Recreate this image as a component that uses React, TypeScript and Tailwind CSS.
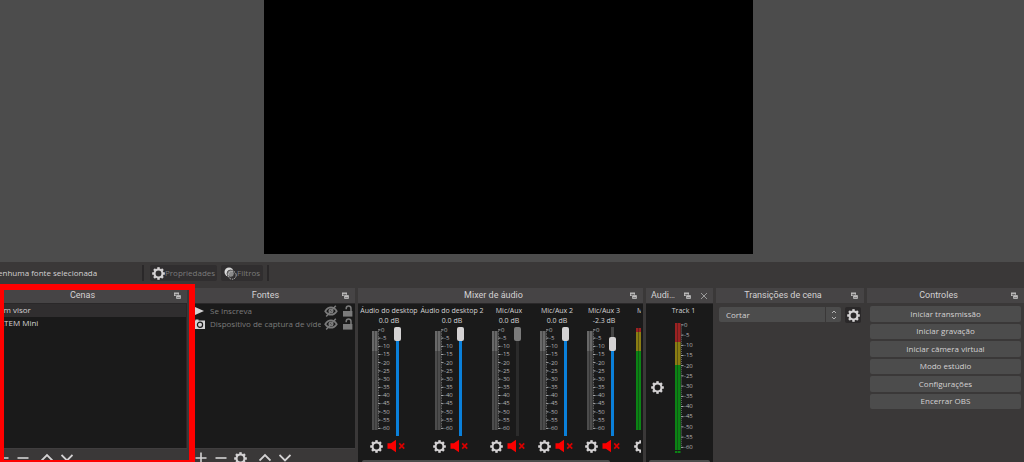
import type { ReactNode } from 'react'
import clsx from 'clsx'

const controls = [
    'Iniciar transmissão',
    'Iniciar gravação',
    'Iniciar câmera virtual',
    'Modo estúdio',
    'Configurações',
    'Encerrar OBS',
]

const channels = [
    { name: 'Áudio do desktop', db: '0.0 dB', level: 100, width: 'w-[62px]' },
    { name: 'Áudio do desktop 2', db: '0.0 dB', level: 100, width: 'w-[64px]' },
    { name: 'Mic/Aux', db: '0.0 dB', level: 100, width: 'w-[50px]', disabled: true },
    { name: 'Mic/Aux 2', db: '0.0 dB', level: 100, width: 'w-[46px]' },
    { name: 'Mic/Aux 3', db: '-2.3 dB', level: 89, width: 'w-[48px]' },
    { name: 'Mic/Aux 4', db: '-2.3 dB', level: 89, width: 'w-[50px]', live: true },
]

const scale = [0, -5, -10, -15, -20, -25, -30, -35, -40, -45, -50, -55, -60]

function GearIcon({ className = 'size-[13px]' }: { className?: string }) {
    return (
        <svg viewBox="0 0 16 16" className={clsx('shrink-0', className)} fill="none" stroke="currentColor" aria-hidden>
            <circle cx="8" cy="8" r="4.9" strokeWidth="2.6" />
            {[0, 45, 90, 135, 180, 225, 270, 315].map((a) => (
                <path key={a} d="M8 0.2V3" strokeWidth="3" transform={`rotate(${a} 8 8)`} />
            ))}
        </svg>
    )
}

function FloatIcon() {
    return (
        <svg viewBox="0 0 9 9" className="size-[9px] shrink-0" aria-hidden>
            <path d="M1 1.5h5v3.5H1z" fill="#bdbcbc" />
            <path d="M1.8 2.9h3.4v1H1.8z" fill="#6a6869" />
            <path d="M3 4h5v4H3z" fill="#d2d1d1" stroke="#464445" strokeWidth=".5" />
            <path d="M3.9 5.8h3.2v1.1H3.9z" fill="#7d7b7c" />
        </svg>
    )
}

function PlusIcon() {
    return (
        <svg viewBox="0 0 12 12" className="size-3" stroke="currentColor" strokeWidth="1.6" aria-hidden>
            <path d="M6 0.5v11M0.5 6h11" />
        </svg>
    )
}

function MinusIcon() {
    return (
        <svg viewBox="0 0 12 12" className="size-3" stroke="currentColor" strokeWidth="1.6" aria-hidden>
            <path d="M0.5 6h11" />
        </svg>
    )
}

function ChevronIcon({ down = false }: { down?: boolean }) {
    return (
        <svg viewBox="0 0 12 12" className="size-3" fill="none" stroke="currentColor" strokeWidth="1.8" aria-hidden>
            <path d={down ? 'M0.5 3l5.5 5.5L11.5 3' : 'M0.5 8.5L6 3l5.5 5.5'} />
        </svg>
    )
}

function HiddenIcon() {
    return (
        <svg viewBox="0 0 14 12" className="h-3 w-[14px]" fill="none" stroke="currentColor" aria-hidden>
            <path d="M1.2 6.2C3 3.4 5 2.4 7 2.4s4 1 5.8 3.8C11 8.8 9 9.8 7 9.8S3 8.8 1.2 6.2z" strokeWidth="1.6" />
            <circle cx="7" cy="6" r="1.8" strokeWidth="1.5" />
            <path d="M11.8 0.8L2.2 11.4" strokeWidth="1.5" />
        </svg>
    )
}

function UnlockedIcon() {
    return (
        <svg viewBox="0 0 11 12" className="h-3 w-[11px]" aria-hidden>
            <path d="M4.2 4.2V3.4A2.4 2.4 0 0 1 9 3.4V6.5" fill="none" stroke="currentColor" strokeWidth="1.5" />
            <path d="M1 6h9.4v5.6H1z" fill="currentColor" />
        </svg>
    )
}

function MutedIcon() {
    return (
        <svg viewBox="0 0 19 14" className="h-[14px] w-[19px] shrink-0" aria-hidden>
            <path d="M0.5 4.2h3.4L9 0.8v12.4L3.9 9.8H0.5z" fill="#fb0000" />
            <path d="M12.2 4.4l5 5.2M17.2 4.4l-5 5.2" fill="none" stroke="#d80000" strokeWidth="1.7" />
        </svg>
    )
}

function FiltersIcon() {
    return (
        <svg viewBox="0 0 13 13" className="size-[13px] shrink-0" aria-hidden>
            <circle cx="5" cy="5" r="4.5" fill="#dadada" />
            <circle cx="6.6" cy="6.6" r="3.6" fill="#8b8b8b" stroke="#302e2f" strokeWidth=".7" />
            <circle cx="8.2" cy="8.2" r="4" fill="none" stroke="#cfcfcf" strokeWidth=".9" strokeDasharray="1.5 1" />
        </svg>
    )
}

function Dock({ title, className, closable, children }: { title: string; className?: string; closable?: boolean; children: ReactNode }) {
    return (
        <section className={clsx('flex min-w-0 flex-col overflow-hidden', className)}>
            <header className="flex h-[15px] shrink-0 items-center bg-[#464445] pr-[5px]">
                <h2 className={clsx("flex-1 truncate font-['Roboto','Open_Sans',sans-serif] text-[9px] leading-[17px]", closable ? 'mr-1 pl-[5px]' : 'text-center')}>
                    {title}
                </h2>
                <button type="button" aria-label="Desacoplar" className="shrink-0">
                    <FloatIcon />
                </button>
                {closable && (
                    <button type="button" aria-label="Fechar" className="ml-2 shrink-0 text-[#9a9a9a]">
                        <svg viewBox="0 0 8 8" className="size-2" stroke="currentColor" aria-hidden>
                            <path d="M1 1l6 6M7 1L1 7" />
                        </svg>
                    </button>
                )}
            </header>
            {children}
        </section>
    )
}

function ListToolbar({ gear, className }: { gear?: boolean; className?: string }) {
    return (
        <div className={clsx('flex h-[14px] shrink-0 items-start overflow-hidden border-t border-[#403e3f] bg-[#3a3838] pt-[3px]', className)}>
            <button type="button" aria-label="Adicionar"><PlusIcon /></button>
            <button type="button" aria-label="Remover" className="ml-2"><MinusIcon /></button>
            {gear && <button type="button" aria-label="Propriedades da fonte" className="ml-[7px]"><GearIcon /></button>}
            <button type="button" aria-label="Mover para cima" className="ml-3"><ChevronIcon /></button>
            <button type="button" aria-label="Mover para baixo" className="ml-2"><ChevronIcon down /></button>
        </div>
    )
}

// Level bars with their tick marks and the dB scale beside them
function Meter({ colored, tall }: { colored?: boolean; tall?: boolean }) {
    const bands = colored ? ['#9c2222', '#8a7d12', '#0b8414'] : ['#686868', '#686868', '#4c4c4c']
    const stops = tall ? [0, 19, 42, 127] : colored ? [0, 4, 23, 102] : [3, 3, 23, 102]
    const height = tall ? 130 : 102
    const step = tall ? 2.04 : 1.64
    return (
        <div className="flex items-start">
            <svg width={9} height={height} viewBox={`0 0 9 ${height}`} aria-hidden>
                {bands.map((color, i) => (
                    <g key={i} fill={color}>
                        <rect x="0" y={stops[i]} width="2.6" height={stops[i + 1] - stops[i]} />
                        <rect x="3" y={stops[i]} width="2.6" height={stops[i + 1] - stops[i]} />
                    </g>
                ))}
                {tall && <path d="M0 128h2.5v2H0zM3 128h2.5v2H3z" fill="#0b8414" />}
                {Array.from({ length: 61 }, (_, i) => (
                    <rect key={i} x="6" y={1.5 + i * step} width={i % 5 ? 1 : 2.5} height=".8" fill={i % 5 ? '#777' : '#ccc'} />
                ))}
            </svg>
            <ol className={clsx('flex w-[11px] flex-col justify-between text-[6px] leading-[4px] text-[#b4b4b4]', tall ? 'h-[126px]' : 'h-[102px]')}>
                {scale.map((n) => <li key={n}>{n}</li>)}
            </ol>
        </div>
    )
}

function Channel({ name, db, level, width, disabled, live }: (typeof channels)[number] & { disabled?: boolean; live?: boolean }) {
    const fill = disabled ? '#2b2b2b' : '#0a80da'
    const rest = disabled ? '#2b2b2b' : '#444444'
    return (
        <div className={clsx('flex shrink-0 flex-col items-center', width)}>
            <span className="text-[7px] leading-[10px] whitespace-nowrap">{name}</span>
            <span className="text-[7px] leading-[10px]">{db}</span>
            <div className="mt-px mr-[5px] flex w-[29px] justify-between">
                <div className="pt-px">
                    <Meter colored={live} />
                </div>
                <input
                    type="range"
                    aria-label={name}
                    defaultValue={level}
                    disabled={disabled}
                    className="-ml-1 h-[109px] w-[7px] shrink-0 appearance-none bg-center bg-no-repeat [background-size:3px_100%] [direction:rtl] [writing-mode:vertical-lr] [&::-webkit-slider-thumb]:h-[14px] [&::-webkit-slider-thumb]:w-[7px] [&::-webkit-slider-thumb]:appearance-none [&::-webkit-slider-thumb]:rounded-xs [&::-webkit-slider-thumb]:bg-[#d4d2d3] disabled:[&::-webkit-slider-thumb]:bg-[#7b7b7b]"
                    style={{ backgroundImage: `linear-gradient(to top, ${fill} ${level - 5}%, ${rest} ${level - 5}%)` }}
                />
            </div>
            <div className="mt-[3px] flex items-center gap-1 pr-[2px]">
                <button type="button" aria-label={`Opções de ${name}`}><GearIcon /></button>
                <button type="button" aria-label={`Ativar som de ${name}`}><MutedIcon /></button>
            </div>
        </div>
    )
}

function SourceRow({ name, icon }: { name: string; icon: ReactNode }) {
    return (
        <li className="flex h-[13px] items-center pr-[2px] pl-1 text-[#7b7b7b]">
            <span className="w-4 shrink-0 text-[#d4d2d3]">{icon}</span>
            <span className="w-[111px] overflow-hidden whitespace-nowrap">{name}</span>
            <button type="button" aria-label={`Mostrar ${name}`} className="ml-auto"><HiddenIcon /></button>
            <button type="button" aria-label={`Bloquear ${name}`} className="ml-1"><UnlockedIcon /></button>
        </li>
    )
}

export default function App() {
    return (
        <div className="flex h-screen flex-col overflow-hidden bg-[#3a3838] font-['Open_Sans','Noto_Sans',sans-serif] text-[8px] leading-[12px] text-[#d4d2d3]">
            {/* Preview */}
            <main className="flex h-[262px] shrink-0 justify-center bg-[#4c4c4c] pr-[7px]">
                <div className="h-[254px] w-[489px] bg-black" />
            </main>

            {/* Source toolbar */}
            <div className="flex h-[26px] shrink-0 items-center pb-1">
                <p className="-ml-2 w-[150px] whitespace-nowrap">Nenhuma fonte selecionada</p>
                <div className="h-4 w-[2px] bg-[#2a2829]" />
                <button type="button" className="ml-1.5 flex h-4 items-center rounded-xs bg-[#302e2f] px-[2px] text-[#7b7b7b]">
                    <GearIcon className="size-[13px] text-[#d4d2d3]" />
                    Propriedades
                </button>
                <button type="button" className="ml-1 flex h-4 items-center rounded-xs bg-[#302e2f] px-[3px] text-[#7b7b7b]">
                    <FiltersIcon />
                    Filtros
                </button>
                <div className="ml-1 h-4 w-[2px] bg-[#2a2829]" />
            </div>

            {/* Docks */}
            <div className="relative grid min-h-0 flex-1 grid-cols-[187fr_165fr_285fr_67fr_148fr_157fr] grid-rows-1 gap-[3px]">
                <Dock title="Cenas" className="-ml-2">
                    <ul className="flex-1 border-t border-r border-[#2a2829] bg-[#1a1a1a]">
                        <li className="h-[13px] bg-[#302e2f] pl-[7px]">Em visor</li>
                        <li className="h-[13px] pl-[7px]">ATEM Mini</li>
                    </ul>
                    <ListToolbar className="pl-[5px]" />
                </Dock>

                <Dock title="Fontes">
                    <ul className="flex-1 border-t border-[#2a2829] bg-[#1a1a1a]">
                        <SourceRow
                            name="Se Inscreva"
                            icon={
                                <svg viewBox="0 0 12 12" className="size-3" fill="currentColor" aria-hidden>
                                    <path d="M1 2l9 4-9 4z" />
                                </svg>
                            }
                        />
                        <SourceRow
                            name="Dispositivo de captura de vídeo"
                            icon={
                                <svg viewBox="0 0 12 12" className="size-3" aria-hidden>
                                    <path d="M0 2.6h1.5V1.4h3v1.2H11V11H0z" fill="currentColor" />
                                    <circle cx="6" cy="6.8" r="2.6" fill="none" stroke="#1a1a1a" strokeWidth="1.2" />
                                </svg>
                            }
                        />
                    </ul>
                    <ListToolbar gear className="pl-[5px]" />
                </Dock>

                <Dock title="Mixer de áudio">
                    <div className="flex flex-1 flex-col overflow-hidden border-t border-[#2a2829] bg-[#1a1a1a]">
                        <div className="mr-[2px] flex flex-1 overflow-hidden pt-[2px]">
                            {channels.map((channel) => <Channel key={channel.name} {...channel} />)}
                        </div>
                        <div className="mx-1 h-[2px] w-[87%] shrink-0 rounded-t-xs bg-[#4c4c4c]" />
                    </div>
                </Dock>

                <Dock title="Audio Monitor" closable>
                    <div className="flex flex-1 flex-col border-t border-[#2a2829] bg-[#1a1a1a] pt-[2px]">
                        <span className="pl-2 text-center text-[7px] leading-[10px]">Track 1</span>
                        <div className="mt-[7px] flex flex-1 items-start pl-[5px]">
                            <button type="button" aria-label="Opções de Track 1" className="mt-[58px] mr-[11px]"><GearIcon /></button>
                            <Meter colored tall />
                        </div>
                        <div className="mx-[3px] h-[2px] shrink-0 rounded-t-xs bg-[#4c4c4c]" />
                    </div>
                </Dock>

                <Dock title="Transições de cena">
                    <div className="flex gap-1 px-[3px] pt-1">
                        <div className="relative flex-1">
                            <select aria-label="Transição" className="block h-[15px] w-full appearance-none rounded-xs bg-[#4c4c4c] px-[7px]">
                                <option>Cortar</option>
                            </select>
                            <span className="pointer-events-none absolute inset-y-0 right-0 flex w-4 items-center justify-center border-l border-[#3a3838] text-[#b4b4b4]">
                                <svg viewBox="0 0 6 10" className="h-[10px] w-[6px]" fill="none" stroke="currentColor" aria-hidden>
                                    <path d="M1 3l2-2 2 2M1 7l2 2 2-2" />
                                </svg>
                            </span>
                        </div>
                        <button type="button" aria-label="Propriedades da transição" className="flex size-4 items-center justify-center rounded-xs bg-[#2a2829]">
                            <GearIcon />
                        </button>
                    </div>
                </Dock>

                <Dock title="Controles">
                    <div className="grid h-[106px] gap-[2px] px-[3px] pt-[3px]">
                        {controls.map((label) => (
                            <button key={label} type="button" className="rounded-xs bg-[#4c4c4c]">
                                {label}
                            </button>
                        ))}
                    </div>
                </Dock>

                {/* Highlight around the scenes dock */}
                <div className="pointer-events-none absolute -top-1 bottom-0 left-0 w-[195px] border-t-[6px] border-r-[6px] border-b-2 border-l-4 border-[#ff0000]" />
            </div>
        </div>
    )
}
